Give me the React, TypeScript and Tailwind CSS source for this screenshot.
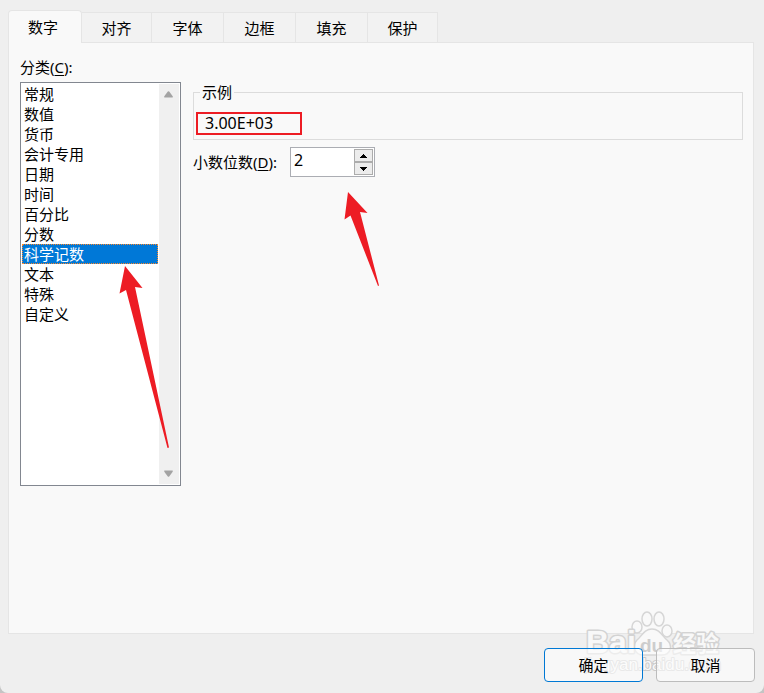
import { useState } from "react"
import type { ReactNode } from "react"
import clsx from "clsx"

const tabs = [
  { label: "数字", width: "w-[74px]" },
  { label: "对齐", width: "w-[70px]" },
  { label: "字体", width: "w-[72px]" },
  { label: "边框", width: "w-[72px]" },
  { label: "填充", width: "w-[72px]" },
  { label: "保护", width: "w-[70px]" },
]

const categories = [
  "常规",
  "数值",
  "货币",
  "会计专用",
  "日期",
  "时间",
  "百分比",
  "分数",
  "科学记数",
  "文本",
  "特殊",
  "自定义",
]

function TabBar() {
  const [active, setActive] = useState("数字")

  return (
    <div role="tablist" className="flex items-end pl-2">
      {tabs.map((tab) => (
        <button
          key={tab.label}
          type="button"
          role="tab"
          aria-selected={tab.label === active}
          onClick={() => setActive(tab.label)}
          className={clsx(
            "border-[#e5e5e5] text-center",
            tab.width,
            tab.label === active
              ? "relative z-10 -mb-px h-[33px] rounded-t-sm border border-b-0 bg-[#f9f9f9] pr-1"
              : "h-[30px] border-t border-r bg-[#f2f2f2] pt-px",
          )}
        >
          {tab.label}
        </button>
      ))}
    </div>
  )
}

function ScrollBar() {
  return (
    <div className="flex w-5 flex-col items-center justify-between bg-[#f0f0f0] py-[7px] pr-px">
      <svg width="9" height="7" viewBox="0 0 10 8" fill="#a3a3a3">
        <path d="M4.2.6Q5-.2 5.8.6L9.8 6V7.5H.2V6Z" />
      </svg>
      <svg width="9" height="7" viewBox="0 0 10 8" fill="#a3a3a3">
        <path d="M4.2 7.4Q5 8.2 5.8 7.4L9.8 2V.5H.2V2Z" />
      </svg>
    </div>
  )
}

function CategoryList() {
  const [selected, setSelected] = useState("科学记数")

  return (
    <div className="relative flex h-[404px] border border-[#828790] bg-white p-px">
      <ul role="listbox" aria-labelledby="category-label" className="mr-px flex-1">
        {categories.map((name) => (
          <li key={name} role="option" aria-selected={name === selected}>
            <button
              type="button"
              onClick={() => setSelected(name)}
              className={clsx(
                "block h-5 w-full border border-dotted px-px text-left leading-[18px]",
                name === selected ? "border-[#ff8728] bg-[#0078d7] text-white" : "border-transparent",
              )}
            >
              {name}
            </button>
          </li>
        ))}
      </ul>
      <ScrollBar />
      <Arrow className="top-[183px] left-[98px]" width={52} height={184}>
        <path d="M6 0 23.5 22 16 21 50 181.500 48.500 182 7 24 .5 27.500Z" />
      </Arrow>
    </div>
  )
}

function Arrow({
  className,
  width,
  height,
  children,
}: {
  className: string
  width: number
  height: number
  children: ReactNode
}) {
  return (
    <svg
      aria-hidden="true"
      className={clsx("pointer-events-none absolute", className)}
      width={width}
      height={height}
      fill="#ed1c24"
    >
      {children}
    </svg>
  )
}

function Sample() {
  return (
    <fieldset className="h-[58px] border border-[#dcdcdc] px-0.5">
      <legend className="ml-1 px-0.5 leading-5">示例</legend>
      <output className="mt-2.5 block h-[23px] w-[106px] border-2 border-[#ed1c24] pl-[7px] text-base leading-[18px]">
        3.00E+03
      </output>
    </fieldset>
  )
}

function DecimalPlaces() {
  const [places, setPlaces] = useState(2)
  const stepClass = "flex h-[13px] w-[19px] items-center justify-center border border-[#acacac] bg-[#ececec]"

  return (
    <div className="relative mt-[7px] flex items-center">
      <label htmlFor="places" className="w-[97px] whitespace-nowrap">
        小数位数(<u className="underline-offset-2">D</u>):
      </label>
      <div className="flex h-[30px] w-[85px] border border-[#abadb3] bg-white p-px">
        <input
          id="places"
          type="text"
          inputMode="numeric"
          value={places}
          onChange={(e) => setPlaces(Number(e.target.value) || 0)}
          className="min-w-0 flex-1 pb-1 pl-0.5 text-base outline-none"
        />
        <div className="flex flex-col">
          <button type="button" aria-label="增加" className={stepClass} onClick={() => setPlaces(places + 1)}>
            <svg width="7" height="4" viewBox="0 0 7 4">
              <path d="M3 0H4V1H5V2H6V3H7V4H0V3H1V2H2V1H3Z" />
            </svg>
          </button>
          <button
            type="button"
            aria-label="减少"
            className={stepClass}
            onClick={() => setPlaces(Math.max(0, places - 1))}
          >
            <svg width="7" height="4" viewBox="0 0 7 4">
              <path d="M0 0H7V1H6V2H5V3H4V4H3V3H2V2H1V1H0Z" />
            </svg>
          </button>
        </div>
      </div>
      <Arrow className="top-[45px] left-[151px]" width={36} height={96}>
        <path d="M4 0 23.500 21 16 20 35 93.500 34 94 6.500 23.500 .5 27.500Z" />
      </Arrow>
    </div>
  )
}

// Sits under the translucent footer buttons so their captions stay readable.
function Watermark() {
  return (
    <svg
      aria-hidden="true"
      className="pointer-events-none absolute right-10 bottom-3"
      width="140"
      height="72"
      viewBox="0 0 140 72"
      fontFamily='"Liberation Sans", "Noto Sans CJK SC", sans-serif'
      fontWeight="700"
    >
      <g fill="#f9f9f9" stroke="#d6d6d6" strokeWidth="1.5">
        <ellipse cx="53" cy="18" rx="5" ry="6" />
        <ellipse cx="63" cy="10" rx="5" ry="7" />
        <ellipse cx="75" cy="10" rx="5" ry="7" />
        <ellipse cx="83" cy="22" rx="5" ry="6" />
        <path d="M68 20C60 20 58 27 53 31C48 36 50 46 59 46H78C87 46 89 36 83 31C78 27 76 20 68 20Z" />
      </g>
      <g fill="#f8f8f8" stroke="#d3d3d3" strokeWidth="3" strokeLinejoin="round" paintOrder="stroke">
        <text x="2" y="44" fontSize="32">Bai</text>
        <text x="89" y="43" fontSize="23">经验</text>
      </g>
      <text x="56" y="43" fontSize="19" fill="#cdcdcd">du</text>
      <text
        x="0"
        y="61"
        fontSize="17"
        fontWeight="400"
        fill="#f9f9f9"
        stroke="#cacaca"
        strokeWidth="2"
        strokeLinejoin="round"
        paintOrder="stroke"
      >
        jingyan.baidu.com
      </text>
    </svg>
  )
}

export default function App() {
  return (
    <div className="min-h-screen bg-[#c4c4c4] font-['Noto_Sans','Noto_Sans_CJK_SC',sans-serif] text-[15px] leading-5 text-black">
      <main className="relative flex min-h-screen flex-col rounded-b-lg bg-[#efefef] pt-2.5">
        <TabBar />
        <section className="mr-2.5 ml-2 flex flex-1 gap-3 border border-[#e5e5e5] bg-[#f9f9f9] pt-3.5 pr-2.5 pb-4 pl-[11px]">
          <div className="w-[161px] shrink-0">
            <div id="category-label" className="mb-[5px]">
              分类(<u className="underline-offset-2">C</u>):
            </div>
            <CategoryList />
          </div>
          <div className="min-w-0 flex-1 pt-[25px]">
            <Sample />
            <DecimalPlaces />
          </div>
        </section>
        <Watermark />
        <footer className="relative flex justify-end gap-[13px] pt-3.5 pr-[9px] pb-[11px]">
          <button type="button" className="h-[34px] w-[99px] rounded border border-[#0078d4] bg-[#fdfdfd]/60">
            确定
          </button>
          <button type="button" className="h-[34px] w-[99px] rounded border border-[#bcbcbc] bg-[#fdfdfd]/60">
            取消
          </button>
        </footer>
      </main>
    </div>
  )
}
